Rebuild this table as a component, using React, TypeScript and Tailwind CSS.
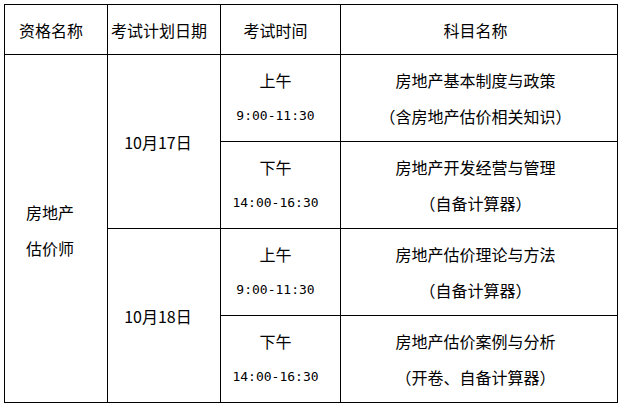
function TimeCell({ label, time }: { label: string; time: string }) {
    return (
        <div className="bg-white flex flex-col items-center justify-center pr-[10px] leading-[36px]">
            <span className="text-[16px]">{label}</span>
            <span className="text-[13px] font-['DejaVu_Sans_Mono','Noto_Sans_CJK_SC',monospace]">{time}</span>
        </div>
    );
}

function SubjectCell({ name, note }: { name: string; note: string }) {
    return (
        <div className="bg-white flex flex-col items-center justify-center pr-[7px] leading-[36px] text-[16px]">
            <span>{name}</span>
            <span>{note}</span>
        </div>
    );
}

export default function App() {
    return (
        <div className="w-[623px] h-[405px] bg-white pt-[4px] pl-[4px] text-black font-['Noto_Sans_CJK_SC','Liberation_Sans',sans-serif]">
            <div className="inline-grid grid-cols-[102px_112px_119px_276px] grid-rows-[49px_86px_86px_86px_86px] gap-px p-px bg-black text-[16px]">
                <div className="bg-white flex items-center justify-center pr-[10px]">资格名称</div>
                <div className="bg-white flex items-center justify-center pr-[10px]">考试计划日期</div>
                <div className="bg-white flex items-center justify-center pr-[10px]">考试时间</div>
                <div className="bg-white flex items-center justify-center pr-[7px]">科目名称</div>

                {/* 资格名称 spans all four exam rows */}
                <div className="row-span-4 bg-white flex flex-col justify-center pl-[21px] pt-[2px] leading-[36px]">
                    <span>房地产</span>
                    <span>估价师</span>
                </div>
                <div className="row-span-2 bg-white flex items-center justify-center pr-[12px]">10月17日</div>
                <TimeCell label="上午" time="9:00-11:30" />
                <SubjectCell name="房地产基本制度与政策" note="（含房地产估价相关知识）" />

                <TimeCell label="下午" time="14:00-16:30" />
                <SubjectCell name="房地产开发经营与管理" note="（自备计算器）" />

                <div className="row-span-2 bg-white flex items-center justify-center pr-[12px]">10月18日</div>
                <TimeCell label="上午" time="9:00-11:30" />
                <SubjectCell name="房地产估价理论与方法" note="（自备计算器）" />

                <TimeCell label="下午" time="14:00-16:30" />
                <SubjectCell name="房地产估价案例与分析" note="（开卷、自备计算器）" />
            </div>
        </div>
    );
}
